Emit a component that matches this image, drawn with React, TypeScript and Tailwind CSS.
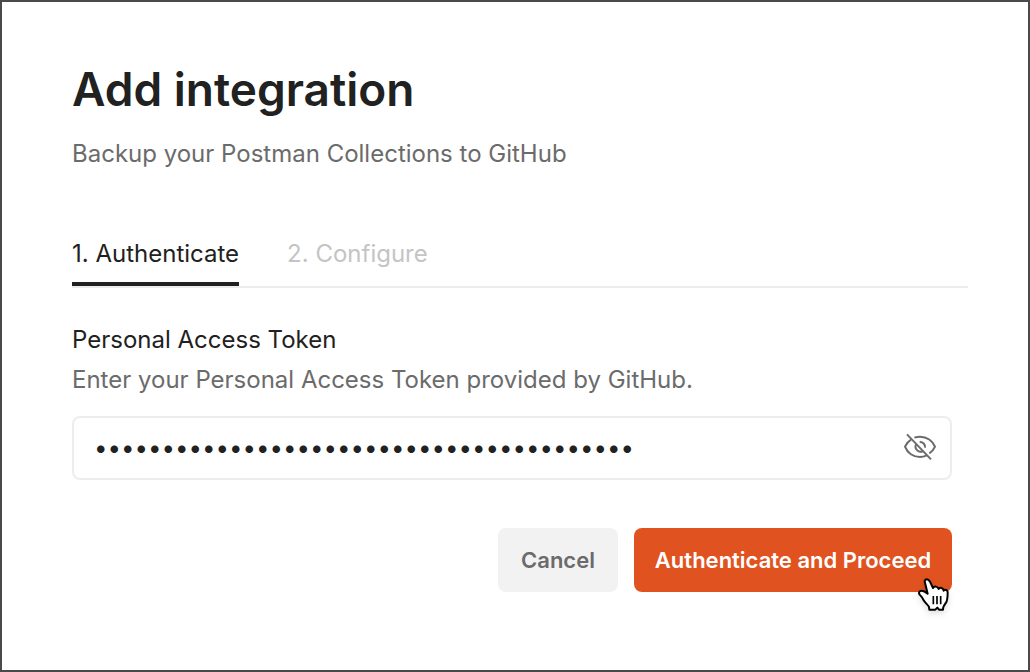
import { useState } from 'react';

function EyeOff() {
  return (
    <svg viewBox="72 66 96 96" className="size-8" fill="none" stroke="#6b6b6b" strokeWidth="6" aria-hidden="true">
      <path d="M81 73 L153 148" />
      <path d="M93 89 C84 95 78 103 75 110 C82 129 100 141 120 141 C128 141 134 139 140 136" />
      <path d="M103 83 C109 81 114 80 120 80 C141 80 158 93 165 110 C161 119 155 126 148 130" />
      <path d="M109 102 A15 15 0 0 0 129 123" />
      <path d="M119 96 A15 15 0 0 1 135 113" />
    </svg>
  );
}

function Pointer() {
  return (
    <svg
      viewBox="51 51 102 108"
      className="pointer-events-none absolute left-[283px] top-[49px] h-9 w-[34px] drop-shadow-md"
      aria-hidden="true"
    >
      <path
        d="M80 58 C75 58 73 63 75 68 L83 101 C77 96 72 92 65 92 C58 92 55 98 59 104 C64 109 68 114 71 121 C76 130 84 134 87 141 L88 149 L106 149 L112 143 L117 149 L129 149 C128 142 132 136 138 128 C143 121 143 110 143 96 C143 90 135 87 131 92 C130 83 120 81 116 87 C113 78 102 78 99 84 L90 65 C87 60 85 58 80 58 Z"
        fill="#fff"
        stroke="#000"
        strokeWidth="6"
        strokeLinejoin="round"
      />
      <path d="M100 108 V133 M111 108 V133 M122 108 V133" stroke="#000" strokeWidth="5" />
    </svg>
  );
}

export default function App() {
  const [token, setToken] = useState('x'.repeat(40));
  const [visible, setVisible] = useState(false);

  return (
    <main className="min-h-screen border-2 border-[#4a4a4a] bg-white pr-[60px] pl-[70px] pt-[58px] font-['Inter',sans-serif] text-2xl text-[#212121]">
      <h1 className="text-[46px] font-semibold leading-[58px]">Add integration</h1>
      <p className="mt-[18px] leading-9 text-[#6b6b6b]">Backup your Postman Collections to GitHub</p>
      <div role="tablist" className="mt-14 flex gap-12 border-b-2 border-[#ededed]">
        <button role="tab" aria-selected="true" className="h-[58px] border-b-4 border-[#212121] pb-0.5">1. Authenticate</button>
        <button role="tab" aria-selected="false" className="h-[58px] border-b-4 border-transparent pb-0.5 text-[#c4c4c4]">2. Configure</button>
      </div>
      <form className="mt-8 mr-4" onSubmit={(e) => e.preventDefault()}>
        <label htmlFor="token" className="block leading-10">Personal Access Token</label>
        <p className="leading-10 text-[#6b6b6b]">Enter your Personal Access Token provided by GitHub.</p>
        <div className="mt-4 flex h-16 items-center rounded-lg border-2 border-[#ededed] pr-[14px] pl-5">
          <input
            id="token"
            type={visible ? 'text' : 'password'}
            value={token}
            onChange={(e) => setToken(e.target.value)}
            className="min-w-0 flex-1 outline-none"
          />
          <button type="button" aria-label="Toggle token visibility" onClick={() => setVisible(!visible)}>
            <EyeOff />
          </button>
        </div>
        <div className="mt-12 flex justify-end gap-4 text-[22px] font-semibold">
          <button type="button" className="h-16 w-30 rounded-lg bg-[#f2f2f2] pt-0.5 text-[#6b6b6b]">Cancel</button>
          <div className="relative">
            <button type="submit" className="h-16 w-[318px] rounded-lg bg-[#e05320] pt-0.5 text-white">Authenticate and Proceed</button>
            <Pointer />
          </div>
        </div>
      </form>
    </main>
  );
}
